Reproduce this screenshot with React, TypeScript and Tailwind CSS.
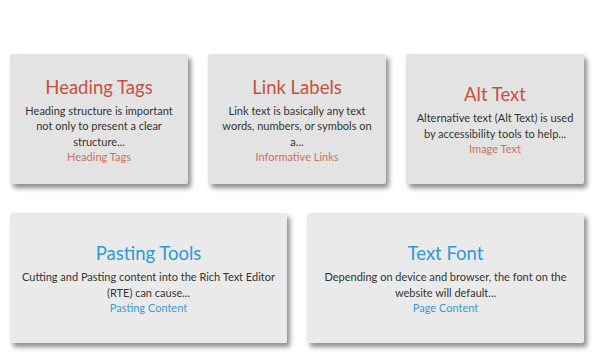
const cards = [
  {
    title: 'Heading Tags',
    text: 'Heading structure is important not only to present a clear structure...',
    link: 'Heading Tags',
    color: 'red',
  },
  {
    title: 'Link Labels',
    text: 'Link text is basically any text words, numbers, or symbols on a...',
    link: 'Informative Links',
    color: 'red',
  },
  {
    title: 'Alt Text',
    text: 'Alternative text (Alt Text) is used by accessibility tools to help...',
    link: 'Image Text',
    color: 'red',
  },
];

const wideCards = [
  {
    title: 'Pasting Tools',
    text: 'Cutting and Pasting content into the Rich Text Editor (RTE) can cause...',
    link: 'Pasting Content',
    color: 'blue',
  },
  {
    title: 'Text Font',
    text: 'Depending on device and browser, the font on the website will default...',
    link: 'Page Content',
    color: 'blue',
  },
];

type Card = (typeof cards)[number];

function InfoCard({ card, light }: { card: Card; light?: boolean }) {
  const isBlue = card.color === 'blue';
  return (
    <div
      className={`h-[130px] rounded-[2px] flex flex-col items-center justify-center text-center shadow-[3px_4px_5px_rgba(0,0,0,0.45)] ${
        light ? 'bg-[#eaeaea] px-[10px]' : 'bg-[#e3e3e3] px-[9px]'
      }`}
    >
      <h2
        className={`text-[18.5px] leading-[26px] mb-[3px] ${isBlue ? 'text-[#2b9ad9]' : 'text-[#c9503d]'}`}
      >
        {card.title}
      </h2>
      <p className="text-[11px] leading-[15.5px] text-[#333333]">{card.text}</p>
      <a href="#" className={`text-[11px] leading-[15.5px] ${isBlue ? 'text-[#3c9bd3]' : 'text-[#d0705f]'}`}>
        {card.link}
      </a>
    </div>
  );
}

export default function App() {
  return (
    <div
      className="w-[600px] h-[358px] bg-white pt-[54px] pl-[10px] pr-[16px]"
      style={{ fontFamily: 'Lato, "Noto Sans", sans-serif' }}
    >
      <div className="grid grid-cols-3 gap-5">
        {cards.map((c) => (
          <InfoCard key={c.title} card={c} />
        ))}
      </div>
      <div className="grid grid-cols-2 gap-5 mt-[29px]">
        {wideCards.map((c) => (
          <InfoCard key={c.title} card={c} light />
        ))}
      </div>
    </div>
  );
}
